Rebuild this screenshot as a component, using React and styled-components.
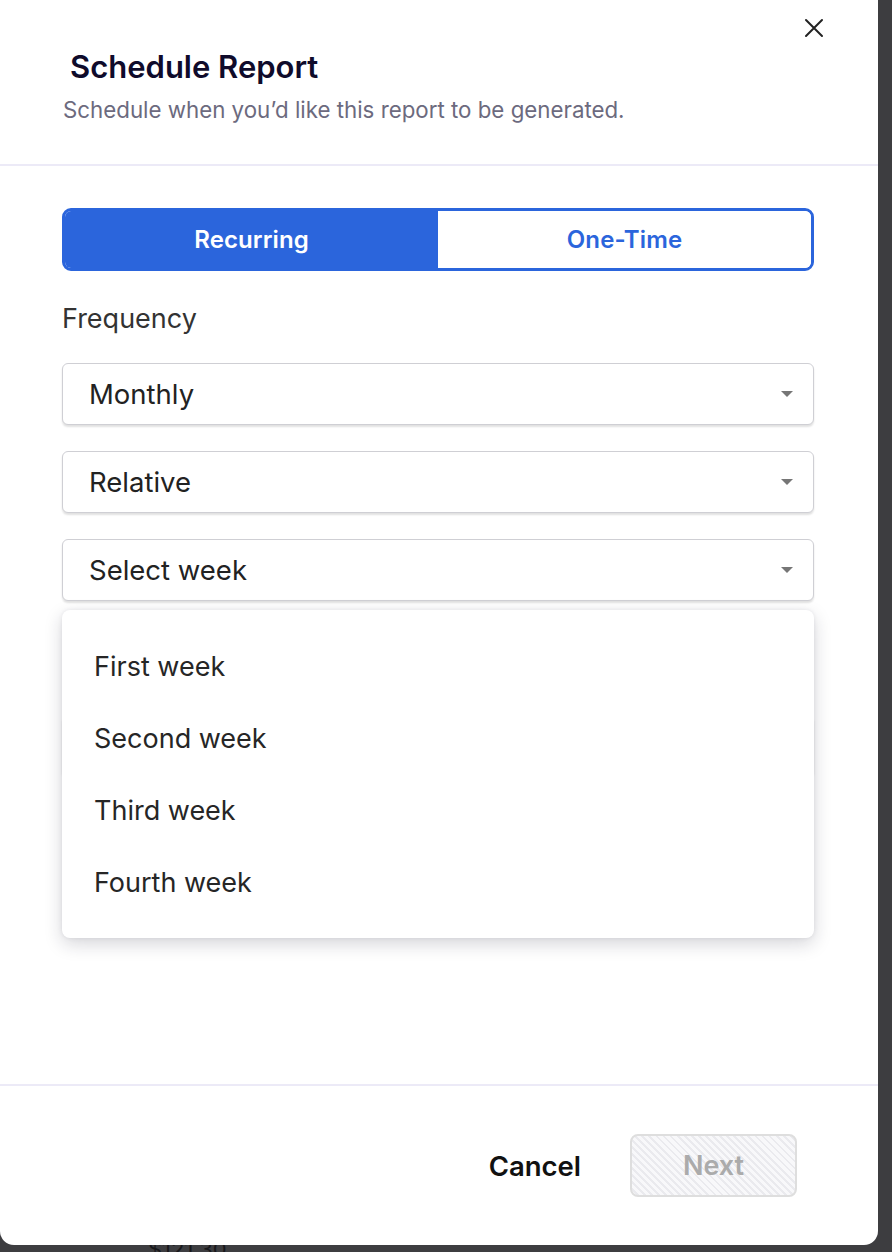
import React from 'react'
import styled, { createGlobalStyle } from 'styled-components'

const GlobalStyle = createGlobalStyle`
  html, body {
    margin: 0;
    padding: 0;
    background: #3d3d40;
  }
  * {
    box-sizing: border-box;
  }
`

const Backdrop = styled.div`
  position: relative;
  width: 892px;
  height: 1252px;
  overflow: hidden;
  background: #3d3d40;
  font-family: Inter, "Noto Sans", sans-serif;
`
const BehindAmount = styled.div`
  position: absolute;
  left: 148px;
  top: 1236px;
  font-size: 22px;
  color: #18181b;
`
const Modal = styled.div`
  position: relative;
  width: 878px;
  height: 1245px;
  background: #fff;
  border-radius: 0 0 14px 14px;
  display: flex;
  flex-direction: column;
`
const Header = styled.header`
  position: relative;
  padding: 48px 0 0 63px;
  height: 166px;
  border-bottom: 2px solid #eceaf7;
`
const Title = styled.h1`
  margin: 0 0 10px 7px;
  font-size: 31px;
  line-height: 38px;
  font-weight: 600;
  color: #0f0b2b;
`
const Subtitle = styled.p`
  margin: 0;
  font-size: 22.3px;
  line-height: 28px;
  color: #6c6a7e;
`
const CloseButton = styled.button`
  position: absolute;
  top: 17px;
  right: 53px;
  width: 22px;
  height: 22px;
  padding: 0;
  border: none;
  background: none;
  display: flex;
  align-items: center;
  justify-content: center;
`
const Body = styled.div`
  flex: 1;
  padding: 42px 64px 0 62px;
  display: flex;
  flex-direction: column;
`
const Toggle = styled.div`
  display: grid;
  grid-template-columns: 1fr 1fr;
  height: 63px;
  border: 3px solid #2b65dc;
  border-radius: 9px;
  overflow: hidden;
`
const ToggleOption = styled.button`
  border: none;
  margin: 0;
  font-family: inherit;
  font-size: 24px;
  font-weight: 600;
  letter-spacing: 0.1px;
  background: ${p => (p.$active ? '#2b65dc' : '#fff')};
  color: ${p => (p.$active ? '#fff' : '#2b65dc')};
`
const Label = styled.div`
  margin-top: 31px;
  font-size: 27px;
  line-height: 34px;
  color: #333;
`
const Fields = styled.div`
  margin-top: 27px;
  display: flex;
  flex-direction: column;
  gap: 26px;
`
const SelectWrap = styled.div`
  position: relative;
  margin-top: ${p => p.$offset || 0}px;
`
const Select = styled.div`
  height: 62px;
  border: 1.5px solid #cfcfd4;
  border-radius: 6px;
  box-shadow: 0 2px 2px rgba(0, 0, 0, 0.12);
  display: flex;
  align-items: center;
  justify-content: space-between;
  padding: 0 20px 0 26px;
  font-size: 27.5px;
  color: #222;
  background: #fff;
`
const Caret = styled.span`
  width: 0;
  height: 0;
  margin-left: auto;
  border-left: 6px solid transparent;
  border-right: 6px solid transparent;
  border-top: 6px solid #767676;
`
const Menu = styled.ul`
  position: absolute;
  top: 71px;
  left: 0;
  right: 0;
  margin: 0;
  padding: 20px 0;
  list-style: none;
  background: #fff;
  border-radius: 8px;
  box-shadow: 0 6px 18px rgba(30, 30, 50, 0.18), 0 0 4px rgba(30, 30, 50, 0.08);
  z-index: 2;
`
const MenuItem = styled.li`
  height: 72px;
  display: flex;
  align-items: center;
  padding-left: 32px;
  font-size: 27px;
  color: #262626;
`
const Footer = styled.footer`
  height: 161px;
  border-top: 2px solid #eceaf7;
  display: flex;
  align-items: center;
  justify-content: flex-end;
  gap: 39px;
  padding-right: 81px;
`
const CancelButton = styled.button`
  border: none;
  background: none;
  font-family: inherit;
  font-size: 27.5px;
  font-weight: 600;
  color: #111;
  padding: 0 10px;
`
const NextButton = styled.button`
  width: 167px;
  height: 63px;
  border: 2px solid #dedede;
  border-radius: 8px;
  font-family: inherit;
  font-size: 27px;
  font-weight: 600;
  color: #ababab;
  background: repeating-linear-gradient(
    45deg,
    #f8f8fa 0px,
    #f8f8fa 3px,
    #eaeaee 3px,
    #eaeaee 5px
  );
`

const weeks = ['First week', 'Second week', 'Third week', 'Fourth week']

export default function App() {
  return (
    <Backdrop>
      <GlobalStyle />
      <BehindAmount>$121.30</BehindAmount>
      <Modal>
        <Header>
          <Title>Schedule Report</Title>
          <Subtitle>Schedule when you’d like this report to be generated.</Subtitle>
          <CloseButton aria-label="Close">
            <svg width="20" height="20" viewBox="0 0 20 20">
              <path d="M2 2L18 18M18 2L2 18" stroke="#222" strokeWidth="2" strokeLinecap="round" />
            </svg>
          </CloseButton>
        </Header>
        <Body>
          <Toggle>
            <ToggleOption $active>Recurring</ToggleOption>
            <ToggleOption>One-Time</ToggleOption>
          </Toggle>
          <Label>Frequency</Label>
          <Fields>
            <Select>Monthly<Caret /></Select>
            <Select>Relative<Caret /></Select>
            <SelectWrap>
              <Select>Select week<Caret /></Select>
              <Menu>
                {weeks.map(w => <MenuItem key={w}>{w}</MenuItem>)}
              </Menu>
            </SelectWrap>
            <SelectWrap $offset={88}>
              <Select><Caret /></Select>
            </SelectWrap>
          </Fields>
        </Body>
        <Footer>
          <CancelButton>Cancel</CancelButton>
          <NextButton disabled>Next</NextButton>
        </Footer>
      </Modal>
    </Backdrop>
  )
}
